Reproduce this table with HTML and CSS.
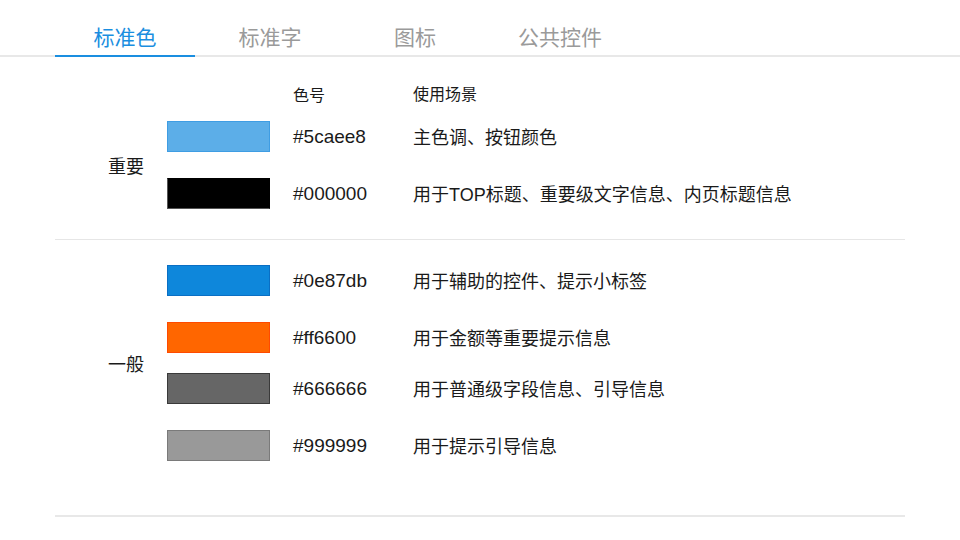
FILE: index.html
```html
<!DOCTYPE html>
<html lang="zh">
<head>
<meta charset="utf-8">
<link rel="stylesheet" href="styles.css">
</head>
<body>
<nav class="tabs">
  <div class="tab active">标准色</div>
  <div class="tab">标准字</div>
  <div class="tab">图标</div>
  <div class="tab">公共控件</div>
</nav>
<main class="content">
  <section class="group g1">
    <div class="head"><span class="hex">色号</span><span class="desc">使用场景</span></div>
    <div class="body">
      <div class="label">重要</div>
      <div class="rows">
        <div class="row"><span class="sw sw-5caee8"></span><span class="hex">#5caee8</span><span class="desc">主色调、按钮颜色</span></div>
        <div class="row"><span class="sw sw-000"></span><span class="hex">#000000</span><span class="desc">用于TOP标题、重要级文字信息、内页标题信息</span></div>
      </div>
    </div>
  </section>
  <section class="group g2">
    <div class="body">
      <div class="label">一般</div>
      <div class="rows">
        <div class="row"><span class="sw sw-0e87db"></span><span class="hex">#0e87db</span><span class="desc">用于辅助的控件、提示小标签</span></div>
        <div class="row"><span class="sw sw-ff6600"></span><span class="hex">#ff6600</span><span class="desc">用于金额等重要提示信息</span></div>
        <div class="row tight"><span class="sw sw-666"></span><span class="hex">#666666</span><span class="desc">用于普通级字段信息、引导信息</span></div>
        <div class="row"><span class="sw sw-999"></span><span class="hex">#999999</span><span class="desc">用于提示引导信息</span></div>
      </div>
    </div>
  </section>
</main>
</body>
</html>
```
FILE: styles.css
```css
html, body {
  margin: 0;
  padding: 0;
  background: #fff;
  width: 960px;
  height: 540px;
  overflow: hidden;
  font-family: "Liberation Sans", "Noto Sans CJK SC", sans-serif;
  color: #1a1a1a;
}
.tabs {
  display: flex;
  gap: 5px;
  padding-left: 55px;
  height: 55px;
  border-bottom: 2px solid #e8e8e8;
}
.tab {
  width: 140px;
  text-align: center;
  font-family: "Noto Sans CJK SC", sans-serif;
  font-size: 21px;
  line-height: 26px;
  padding-top: 23px;
  color: #9a9a9a;
  box-sizing: border-box;
  height: 57px;
  margin-bottom: -2px;
}
.tab.active {
  color: #1a8ee0;
  border-bottom: 2px solid #1a8ee0;
}
.content {
  margin: 0 55px;
}
.g1 {
  padding: 25px 0 30px;
  border-bottom: 1px solid #e6e6e6;
}
.g2 {
  padding: 25px 0 54px;
  border-bottom: 2px solid #e8e8e8;
}
.head {
  display: flex;
  align-items: center;
  height: 24px;
  margin-bottom: 15px;
  padding-left: 238px;
  font-family: "Noto Sans CJK SC", sans-serif;
}
.head .hex, .head .desc {
  font-family: "Noto Sans CJK SC", sans-serif;
  font-size: 16px;
}
.body {
  display: flex;
  align-items: center;
}
.label {
  width: 112px;
  padding-left: 53px;
  box-sizing: border-box;
  font-family: "Noto Sans CJK SC", sans-serif;
  font-size: 18px;
  color: #1a1a1a;
}
.rows {
  display: flex;
  flex-direction: column;
  gap: 26px;
}
.row {
  display: flex;
  align-items: center;
  height: 31px;
}
.row.tight {
  margin-top: -6px;
}
.sw {
  width: 103px;
  height: 31px;
  box-sizing: border-box;
  margin-right: 23px;
  flex: none;
  border: 1px solid;
}
.sw-5caee8 { background: #5caee8; border-color: #3f9de3; }
.sw-000 { background: #000; border-color: #555; border-top-color: #000; border-right-color: #000; }
.sw-0e87db { background: #0e87db; border-color: #0a6fc4; }
.sw-ff6600 { background: #ff6600; border-color: #ff4a00; }
.sw-666 { background: #666; border-color: #3a3a3a; }
.sw-999 { background: #999; border-color: #7a7a7a; }
.hex {
  width: 120px;
  flex: none;
  font-size: 19px;
}
.desc {
  font-family: "Liberation Sans", "Noto Sans CJK SC", sans-serif;
  font-size: 18px;
  white-space: nowrap;
  position: relative;
  top: -1px;
}
```
